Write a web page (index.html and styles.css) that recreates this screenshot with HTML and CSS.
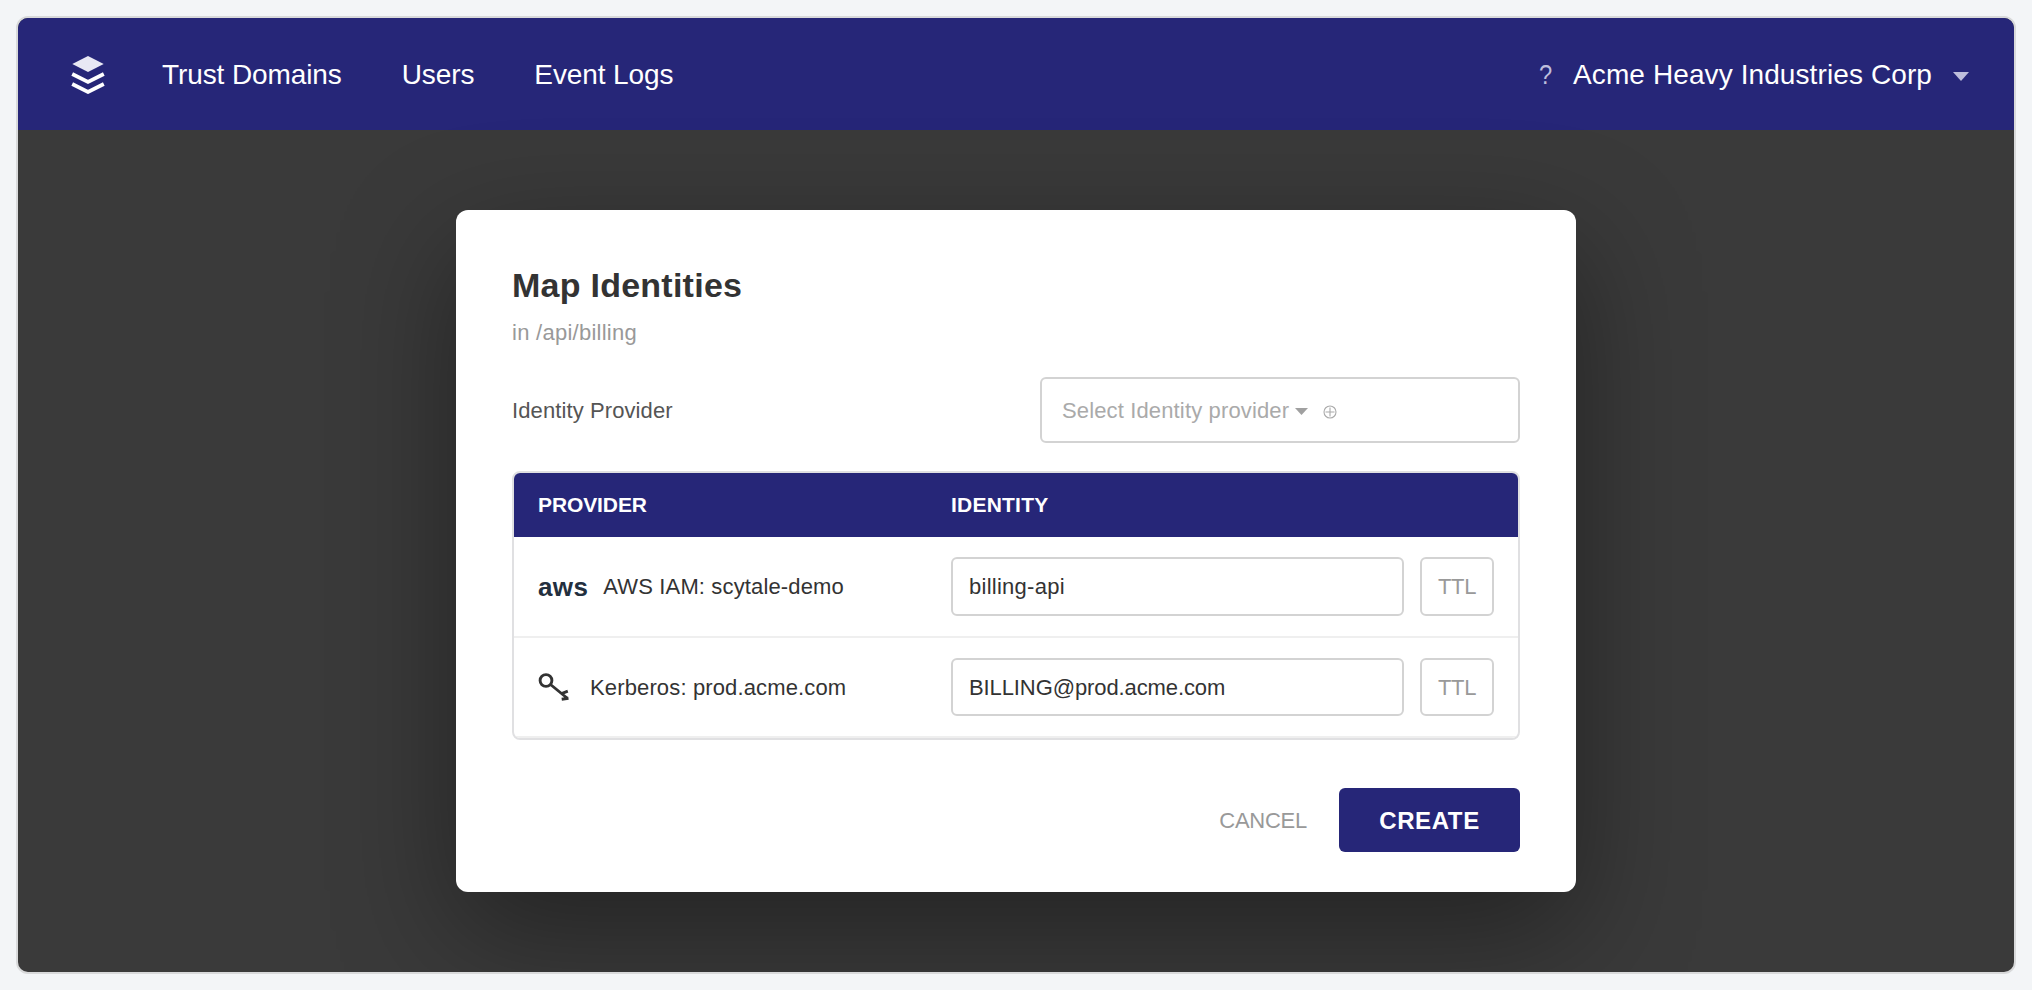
FILE: index.html
```html
<!DOCTYPE html>
<html lang="en">
<head>
<meta charset="utf-8">
<title>Map Identities</title>
<link rel="stylesheet" href="styles.css">
</head>
<body>
<div class="frame">
  <header class="topbar">
    <svg class="logo" width="36" height="40" viewBox="0 0 36 40" aria-hidden="true">
      <path d="M18 2L33.700 10L18 18L2.300 10Z" fill="#e8e8f4"/>
      <path d="M2.200 20L18 28L33.800 20M2.200 30L18 38L33.800 30" fill="none" stroke="#fff" stroke-width="3.700"/>
    </svg>
    <nav class="nav">
      <a>Trust Domains</a>
      <a>Users</a>
      <a>Event Logs</a>
    </nav>
    <div class="account">
      <span class="help">?</span>
      <span class="org">Acme Heavy Industries Corp</span>
      <svg class="org-caret" width="16" height="9" viewBox="0 0 16 9" aria-hidden="true"><path d="M0 0H16L8 9Z" fill="#bebedc"/></svg>
    </div>
  </header>
  <main class="stage">
    <section class="modal">
      <h1 class="title">Map Identities</h1>
      <p class="path">in /api/billing</p>
      <div class="field">
        <span class="field-label">Identity Provider</span>
        <div class="select">
          <span class="placeholder">Select Identity provider</span>
          <svg class="select-caret" width="13" height="7" viewBox="0 0 13 7" aria-hidden="true"><path d="M0 0H13L6.500 7Z" fill="#a0a0a0"/></svg>
          <svg class="select-add" width="14" height="14" viewBox="0 0 14 14" aria-hidden="true"><path d="M7 1A6 6 0 1 0 7 13A6 6 0 1 0 7 1M7 2.500V11.500M2.500 7H11.500" fill="none" stroke="#aaa" stroke-width="1.100"/></svg>
        </div>
      </div>
      <div class="table">
        <div class="row head"><span class="h-provider">PROVIDER</span><span class="h-identity">IDENTITY</span></div>
        <div class="row">
          <div class="provider"><span class="aws">aws</span><span class="name">AWS IAM: scytale-demo</span></div>
          <div class="input lower">billing-api</div>
          <div class="ttl">TTL</div>
        </div>
        <div class="row last">
          <div class="provider">
            <svg class="key" width="32" height="28" viewBox="0 0 32 28" aria-hidden="true">
              <circle cx="8" cy="7.500" r="5.900" fill="none" stroke="#333" stroke-width="2.900"/>
              <path d="M12.500 11.500L29 25M23 20.800L29.800 18.200M23.700 26.300L30.500 25.300" fill="none" stroke="#333" stroke-width="2.900"/>
            </svg>
            <span class="name">Kerberos: prod.acme.com</span>
          </div>
          <div class="input upper">BILLING@prod.acme.com</div>
          <div class="ttl">TTL</div>
        </div>
      </div>
      <div class="actions">
        <span class="cancel">CANCEL</span>
        <span class="create">CREATE</span>
      </div>
    </section>
  </main>
</div>
</body>
</html>
```
FILE: styles.css
```css
* { box-sizing: border-box; }
body {
  margin: 0;
  padding: 16px;
  height: 990px;
  background: #f3f5f7;
  font: 22px/28px "Liberation Sans", Arial, sans-serif;
  color: #333;
  white-space: nowrap;
}
.frame {
  height: 958px;
  border: 2px solid #d8d9da;
  border-radius: 12px;
  background: #3a3a3a;
  overflow: hidden;
  display: flex;
  flex-direction: column;
}
.topbar {
  height: 112px;
  flex: none;
  display: flex;
  align-items: center;
  padding: 0 45px 0 52px;
  background: #262678;
  color: #fff;
  font-size: 28px;
}
.logo { margin-right: 56px; }
.nav { display: flex; gap: 60px; padding-top: 2px; letter-spacing: -0.1px; }
.account { margin-left: auto; display: flex; align-items: center; }
.help {
  width: 16px;
  margin-right: 18px;
  padding-top: 2px;
  color: #bebedc;
  transform: scaleX(0.85);
  transform-origin: left;
}
.org { padding-top: 2px; letter-spacing: 0.1px; }
.org-caret { margin: 4px 0 0 21px; }
.stage { flex: 1; display: flex; justify-content: center; padding-top: 80px; }
.modal {
  width: 1120px;
  height: 682px;
  padding: 55px 56px 0;
  border-radius: 12px;
  background: #fff;
  box-shadow: 0 40px 120px rgba(0, 0, 0, 0.4);
}
.title { margin: 0; font-size: 34px; line-height: 40px; letter-spacing: 0.25px; }
.path { margin: 14px 0 0; color: #999; letter-spacing: 0.26px; }
.field { display: flex; justify-content: space-between; align-items: center; margin-top: 30px; height: 66px; }
.field-label { padding-top: 2px; color: #555; letter-spacing: 0.1px; }
.select {
  width: 480px;
  height: 66px;
  display: flex;
  align-items: center;
  padding-left: 20px;
  border: 2px solid #d3d3d3;
  border-radius: 6px;
  color: #aaa;
}
.placeholder { padding-top: 2px; letter-spacing: 0.14px; }
.select-caret { margin: 3px 0 0 6px; }
.select-add { margin: 3px 0 0 15px; }
.table {
  margin-top: 28px;
  border: 2px solid #e0e0e2;
  border-radius: 8px;
  overflow: hidden;
}
.row {
  height: 101px;
  display: grid;
  grid-template-columns: 397px 453px 74px;
  column-gap: 16px;
  padding: 20px 24px;
  border-bottom: 2px solid #efefef;
}
.row.last { height: 100px; }
.row.head {
  height: 64px;
  padding: 0 24px 1px;
  align-items: center;
  border: 0;
  background: #262678;
  color: #fff;
  font-size: 21px;
  font-weight: bold;
}
.h-provider { letter-spacing: -0.1px; }
.h-identity { letter-spacing: 0.22px; }
.provider { display: flex; align-items: center; }
.name { letter-spacing: 0.14px; }
.aws { margin-right: 15px; font-size: 26px; font-weight: bold; letter-spacing: 0.4px; color: #232f3e; }
.key { margin-right: 20px; }
.input, .ttl {
  display: flex;
  align-items: center;
  border: 2px solid #d3d3d3;
  border-radius: 6px;
}
.input { padding-left: 16px; }
.last .input, .last .ttl { padding-top: 1px; }
.last .name { padding-top: 1px; }
.lower { letter-spacing: 0.26px; }
.upper { letter-spacing: -0.1px; }
.ttl { justify-content: center; color: #999; letter-spacing: -0.3px; }
.actions { display: flex; justify-content: flex-end; align-items: center; margin-top: 48px; gap: 32px; }
.cancel { padding-top: 2px; color: #999; letter-spacing: -0.25px; }
.create {
  width: 181px;
  height: 64px;
  padding-top: 2px;
  display: flex;
  align-items: center;
  justify-content: center;
  border-radius: 6px;
  background: #262678;
  color: #fff;
  font-size: 24px;
  font-weight: bold;
  letter-spacing: 0.6px;
}
```
